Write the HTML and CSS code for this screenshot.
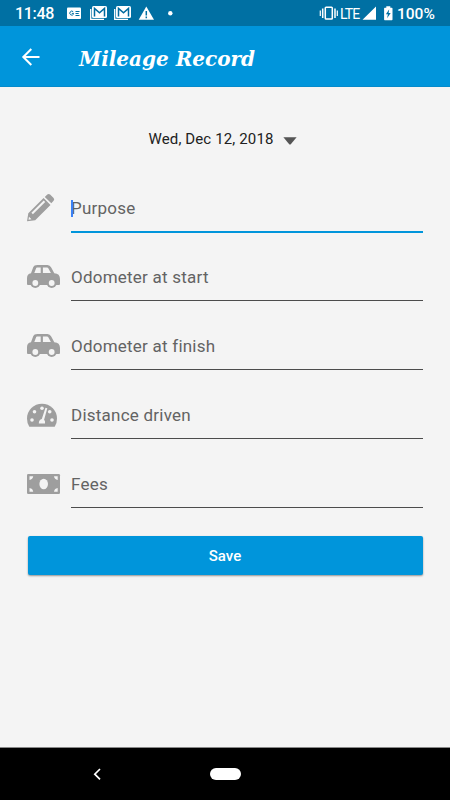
FILE: index.html
```html
<!DOCTYPE html>
<html lang="en">
<head>
<meta charset="utf-8">
<title>Mileage Record</title>
<link rel="stylesheet" href="styles.css">
</head>
<body>
<div class="status">
  <span class="clock">11:48</span>
  <svg class="notices" width="110" height="26" viewBox="66 0 110 26">
    <rect x="67" y="7.500" width="14" height="11.500" rx="1" fill="#fff"/>
    <path d="M73.200 11.700a2 2 0 1 0 .3 2.500v-.8h-1.700M75.500 11.500h4M75.500 13.500h3.200M75.500 15.500h4" fill="none" stroke="#0070a3" stroke-width="1"/>
    <g id="mail">
      <path d="M90.700 9v10.300H104" fill="none" stroke="#fff" stroke-width="1.300"/>
      <rect x="92" y="6" width="15" height="12" rx="1.500" fill="#fff"/>
      <path d="M94.500 16.500V8.500l5 4.300 5-4.300v8" fill="none" stroke="#006a9e" stroke-width="1.500"/>
    </g>
    <use href="#mail" x="24"/>
    <path d="M146.300 6.500L154 19.700h-15.300z" fill="#fff"/>
    <path d="M146.300 11v4.500M146.300 16.500v1.700" stroke="#0070a3" stroke-width="1.500"/>
    <circle cx="170.300" cy="13.300" r="2.200" fill="#fff"/>
  </svg>
  <span class="space"></span>
  <svg width="20" height="26" viewBox="319 0 20 26" fill="none" stroke="#fff">
    <rect x="325.300" y="7.300" width="7" height="11.700" rx=".8" stroke-width="1.500"/>
    <path d="M322.700 8.500v9.500M335 8.500v9.500" stroke-width="1.500"/>
    <path d="M320.300 10.500v5.500M337.300 10.500v5.500" stroke-width="1.200"/>
  </svg>
  <span class="lte">LTE</span>
  <svg class="power" width="33" height="26" viewBox="361 0 33 26">
    <path d="M376 6.500v13.300h-13.500zM386.300 6.300h4v1.500h1.500q.7 0 .7.700v11q0 .7-.7.700h-7q-.7 0-.7-.7v-11q0-.7.700-.7h1.500z" fill="#fff"/>
    <path d="M389.200 9.200l-3.300 5h2l-.8 4 3.600-5.300h-2.100z" fill="#0070a3"/>
  </svg>
  <span class="percent">100%</span>
</div>
<header class="bar">
  <svg class="back" width="20" height="20" viewBox="0 0 20 20" fill="none" stroke="#fff" stroke-width="2"><path d="M19.500 10H3.500M11.300 2L3.300 10l8 8"/></svg>
  <h1>Mileage Record</h1>
</header>
<main>
  <div class="date"><span>Wed, Dec 12, 2018</span><svg width="14" height="8" viewBox="0 0 14 8"><path d="M.4.200h13.200L7.800 7.200q-.8.700-1.600 0z" fill="#555"/></svg></div>
  <div class="row">
    <svg width="34" height="30" viewBox="0 0 34 30" fill="#9e9e9e"><path fill-rule="evenodd" d="M0 28.200L1.300 20.200 16.600 5l6.900 6.900L8.200 27.200zM2 23.700l-.5 3 3-.5zM4.400 19.800l1.500 1.500L18.200 9 16.700 7.500z"/><path d="M17.800 3.900L20.300 1.500q1.400-1.200 2.800 0l3.500 3.600q1.200 1.400 0 2.700l-2.300 2.500z"/></svg>
    <div class="field active"><i class="caret"></i>Purpose</div>
  </div>
  <div class="row">
    <svg width="34" height="30" viewBox="0 0 34 30"><g id="car"><path fill="#9e9e9e" fill-rule="evenodd" d="M10.300 3h10.200q2.500 0 3.700 2.500l3.100 5.700q5.700.3 5.700 5.800v5q0 1-1 1H1q-1 0-1-1v-6q0-4.200 4-4.800L6.300 5Q7 3 10.300 3zM9.200 6L7.300 11.100h6.400V5.500h-3.700q-.6 0-.8.500zM15.900 5.500v5.600h8L21.300 6.200q-.4-.7-1.300-.7z"/><circle cx="8.300" cy="21" r="5" fill="#9e9e9e"/><circle cx="24.700" cy="21" r="5" fill="#9e9e9e"/><circle cx="8.300" cy="21" r="2.900" fill="#f4f4f4"/><circle cx="24.700" cy="21" r="2.900" fill="#f4f4f4"/></g></svg>
    <div class="field">Odometer at start</div>
  </div>
  <div class="row">
    <svg width="34" height="30" viewBox="0 0 34 30"><use href="#car"/></svg>
    <div class="field">Odometer at finish</div>
  </div>
  <div class="row">
    <svg width="34" height="30" viewBox="0 0 34 30"><path d="M2.300 26.700Q0 23 0 18.700a15 15 0 0 1 30 0q0 4.300-2.300 8z" fill="#9e9e9e"/><g fill="#f4f4f4"><circle cx="5" cy="20" r="1.800"/><circle cx="7.500" cy="11.700" r="1.800"/><circle cx="15" cy="8.300" r="1.800"/><circle cx="22.700" cy="11.700" r="1.800"/><circle cx="25" cy="20" r="1.800"/><path d="M18.500 7.700l1.800.6-3.200 11.400q1.300.9.900 3.800h-6.200q0-3.700 3-4.500z"/></g></svg>
    <div class="field">Distance driven</div>
  </div>
  <div class="row">
    <svg width="34" height="30" viewBox="0 0 34 30"><rect y="5" width="33" height="20" rx="1.200" fill="#9e9e9e"/><g fill="#f4f4f4"><ellipse cx="16.700" cy="15" rx="4.300" ry="5.200"/><path d="M2.500 7.300h3.700q-.5 3.300-3.700 3.700zM30.700 7.300H27q.5 3.300 3.700 3.700zM2.500 22.700h3.700q-.5-3.300-3.700-3.700zM30.700 22.700H27q.5-3.300 3.700-3.700z"/></g></svg>
    <div class="field">Fees</div>
  </div>
  <button class="save">Save</button>
</main>
<nav>
  <svg width="10" height="14" viewBox="0 0 10 14" fill="none" stroke="#fff" stroke-width="1.700"><path d="M8 2L2.800 7.200 8 12.400"/></svg>
  <span class="pill"></span>
</nav>
</body>
</html>
```
FILE: styles.css
```css
* { box-sizing: border-box; }
body {
  margin: 0;
  width: 450px;
  height: 800px;
  display: flex;
  flex-direction: column;
  background: #f4f4f4;
  font-family: Roboto, sans-serif;
  overflow: hidden;
}
svg { display: block; flex: none; }
.status {
  height: 26px;
  flex: none;
  display: flex;
  align-items: center;
  background: #0070a3;
  color: #fff;
  padding: 0 15px;
  white-space: nowrap;
}
.clock, .percent { font-size: 16px; font-weight: 500; line-height: 26px; padding-top: 2px; }
.clock { width: 51px; letter-spacing: -.3px; }
.percent { width: 38px; font-size: 15.5px; }
.space { flex: 1; }
.lte { width: 22px; font-size: 14px; line-height: 26px; letter-spacing: -.9px; padding: 1px 0 0 1px; }
.power { margin-right: 3px; }
.bar {
  height: 61px;
  flex: none;
  display: flex;
  align-items: center;
  background: #0095db;
  border-bottom: 1px solid #058bcb;
  padding-left: 20px;
}
.back { margin-top: 1px; }
h1 {
  margin: 6px 0 0 39px;
  color: #fff;
  font: italic bold 20px/28px "DejaVu Serif", serif;
  white-space: nowrap;
}
main { flex: 1; padding: 0 27px; }
.date {
  height: 87px;
  padding: 41px 0 0 121.500px;
  display: flex;
  align-items: flex-start;
  color: #212121;
  font-size: 15px;
  line-height: 22px;
  letter-spacing: .13px;
}
.date span { width: 134.500px; white-space: nowrap; }
.date svg { margin-top: 9px; }
.row {
  height: 69px;
  display: flex;
  align-items: flex-start;
  padding-top: 19px;
}
.field {
  position: relative;
  flex: 1;
  height: 39px;
  margin-left: 10px;
  border-bottom: 1px solid #4c4c4c;
  color: #636363;
  font-size: 17px;
  line-height: 31px;
  letter-spacing: .23px;
}
.active { height: 40px; border-bottom: 2px solid #0095db; }
.caret {
  position: absolute;
  left: 0;
  top: 7px;
  width: 2px;
  height: 17px;
  background: #3b82f6;
}
.save {
  display: block;
  width: 395px;
  height: 39px;
  margin: 17px 0 0 .5px;
  border: 0;
  border-radius: 2px;
  background: #0095db;
  color: #fff;
  font: 500 15px/39px Roboto, sans-serif;
  padding: 1px 0 0;
  box-shadow: 0 1px 2px rgba(0, 0, 0, .4);
}
nav {
  height: 53px;
  flex: none;
  display: flex;
  align-items: center;
  background: #000;
  border-top: 1px solid #888;
  padding-left: 92px;
}
.pill {
  width: 31px;
  height: 12px;
  margin-left: 107.500px;
  border-radius: 6px;
  background: #fff;
}
```
